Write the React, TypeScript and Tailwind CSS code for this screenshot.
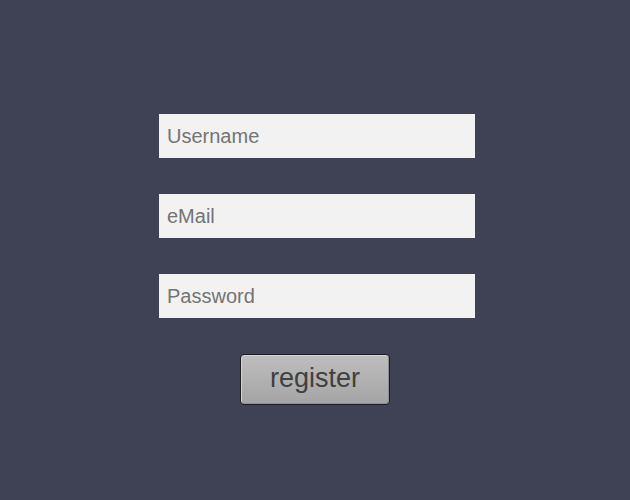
import React from "react";

export default function App() {
  return (
    <div
      className="w-[630px] h-[500px] bg-[#3f4254] flex flex-col items-center pt-[114px]"
      style={{ fontFamily: '"Liberation Sans", Arial, sans-serif' }}
    >
      <div className="flex flex-col gap-[36px] ml-[4px]">
        {["Username", "eMail", "Password"].map((p) => (
          <input
            key={p}
            type={p === "Password" ? "password" : "text"}
            placeholder={p}
            className="w-[316px] h-[44px] bg-[#f2f2f3] px-[8px] text-[20px] text-[#333] placeholder:text-[#747474] outline-none border-0"
          />
        ))}
      </div>
      <button className="mt-[36px] w-[150px] h-[51px] rounded-[4px] border border-[#1e1e22] bg-gradient-to-b from-[#bebebe] to-[#a4a4a4] shadow-[inset_1px_1px_0_#d4d4d4,inset_-1px_-1px_0_#909090] text-[27px] text-[#404040] leading-none pb-[3px]">
        register
      </button>
    </div>
  );
}
